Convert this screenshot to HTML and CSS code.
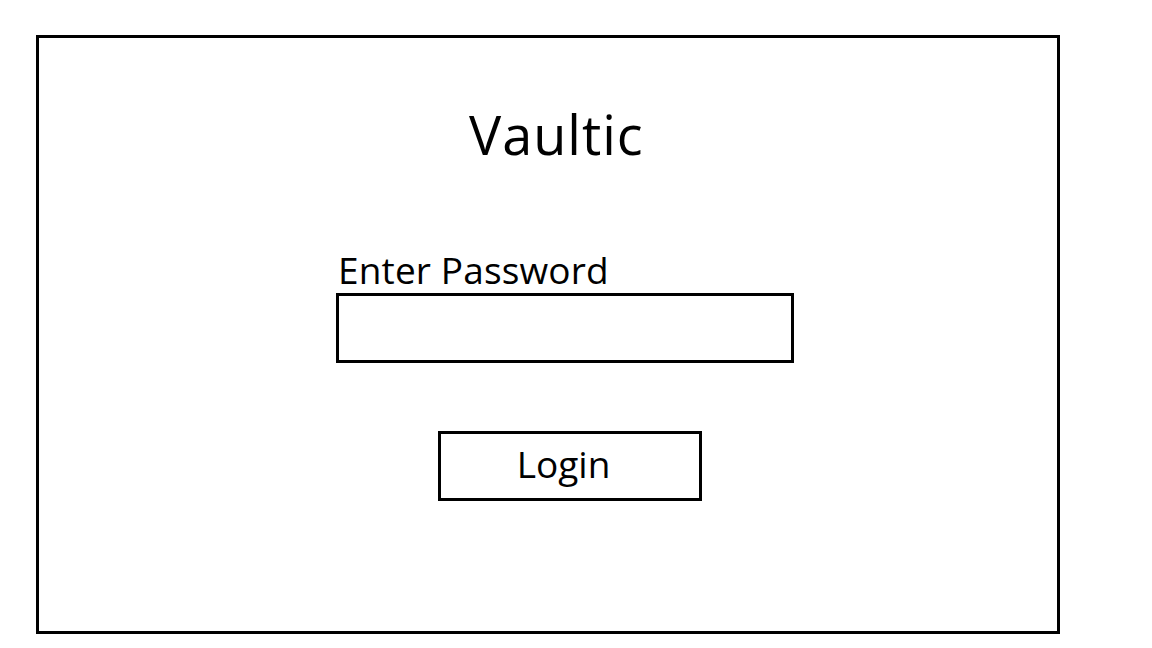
FILE: index.html
```html
<!DOCTYPE html>
<html lang="en">
<head>
<meta charset="utf-8">
<title>Vaultic</title>
<link rel="stylesheet" href="styles.css">
</head>
<body>
  <main class="frame">
    <h1 class="title">Vaultic</h1>
    <form class="login-form">
      <label class="label" for="pw">Enter Password</label>
      <input class="password" id="pw" type="password">
      <button class="login-btn" type="button">Login</button>
    </form>
  </main>
</body>
</html>
```

FILE: styles.css
```css
html, body {
  margin: 0;
  padding: 0;
  background: #fff;
}

body {
  font-family: "Open Sans", "Noto Sans", sans-serif;
  color: #000;
}

.frame {
  box-sizing: border-box;
  width: 1024px;
  height: 599px;
  margin: 35px 0 0 36px;
  border: 3px solid #000;
  padding-top: 70px;
}

.title {
  margin: 0 0 0 430px;
  font-size: 54px;
  line-height: 53px;
  font-weight: 400;
  letter-spacing: 1px;
}

.login-form {
  display: flex;
  flex-direction: column;
  align-items: flex-start;
  margin: 90px 0 0 297px;
}

.label {
  font-size: 37px;
  line-height: 37px;
  margin-left: 2px;
  letter-spacing: 0.15px;
}

.password {
  box-sizing: border-box;
  width: 458px;
  height: 70px;
  margin: 5px 0 0 0;
  border: 3px solid #000;
  border-radius: 0;
  padding: 0;
  background: #fff;
  outline: none;
}

.login-btn {
  box-sizing: border-box;
  width: 264px;
  height: 70px;
  margin: 68px 0 0 102px;
  border: 3px solid #000;
  border-radius: 0;
  background: #fff;
  color: #000;
  font-family: inherit;
  font-size: 37px;
  line-height: 37px;
  padding: 0 13px 6px 0;
  display: flex;
  align-items: center;
  justify-content: center;
}
```
